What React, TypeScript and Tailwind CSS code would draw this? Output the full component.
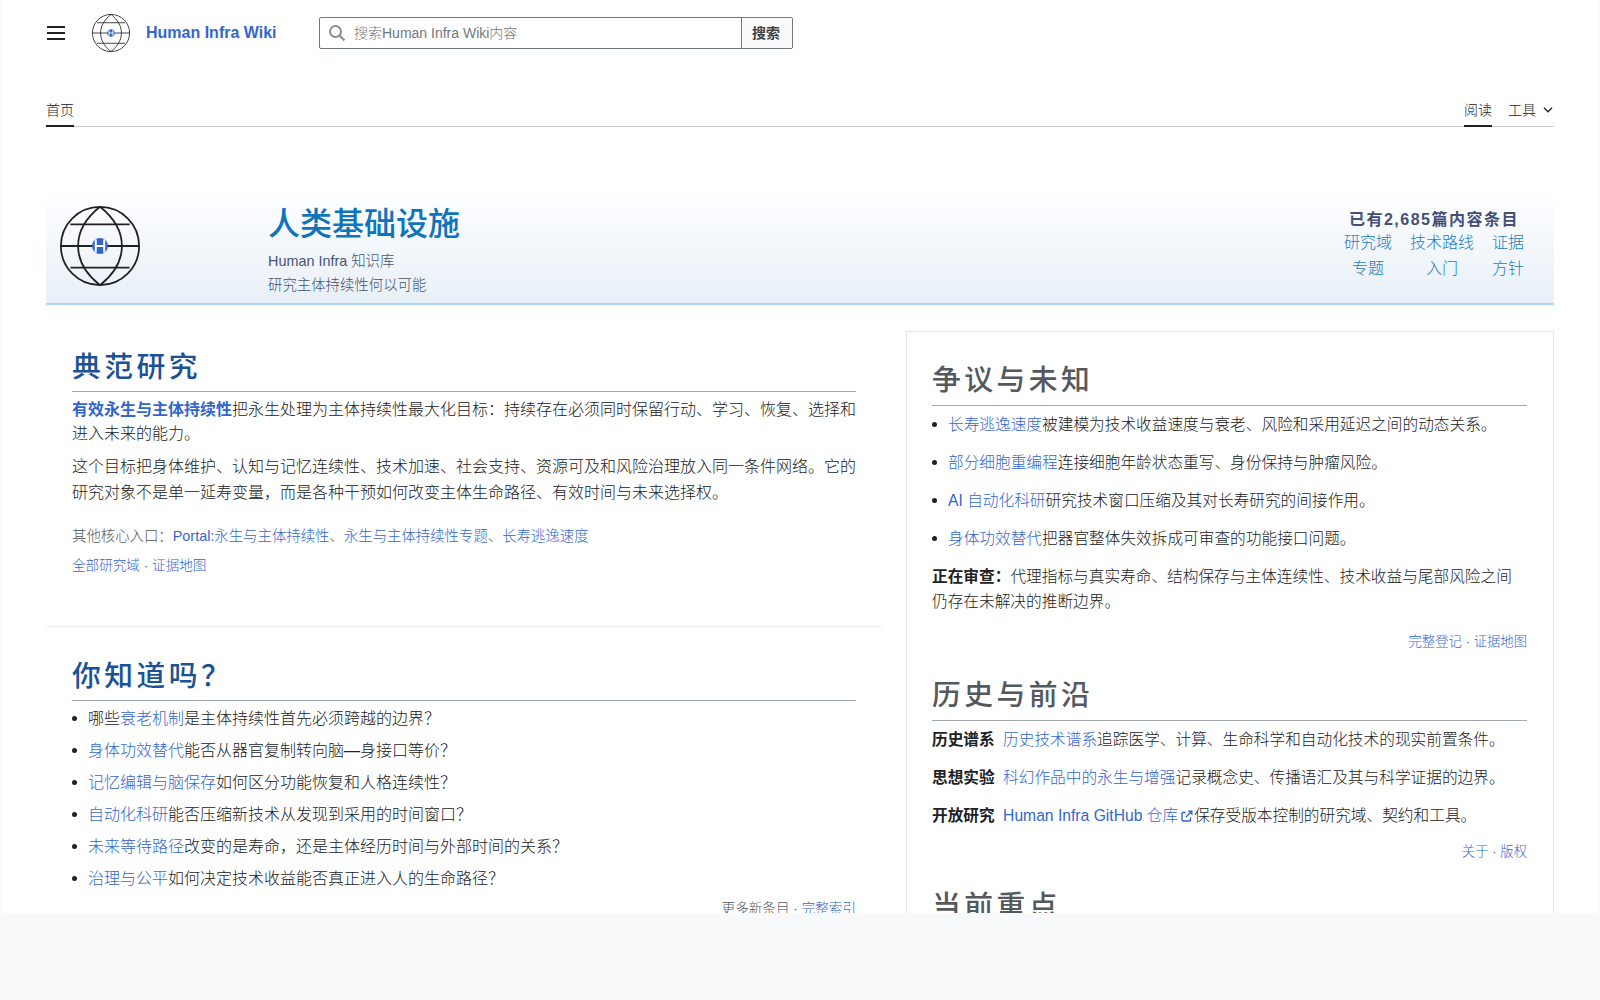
import React from 'react';

const Link = ({ children }: { children: React.ReactNode }) => (
  <a href="#" className="text-[#3366cc]">{children}</a>
);

const Globe = ({ className }: { className: string }) => (
  <svg viewBox="0 0 100 100" className={className} fill="none" stroke="#202122" strokeWidth="2.2">
    <circle cx="50" cy="50" r="48.9" />
    <path d="M50 1 C13.5 30 13.5 70 50 99 M50 1 C86.5 30 86.5 70 50 99" />
    <path d="M1 50H99 M13 23H87 M13 77H87" />
    <circle cx="50" cy="50" r="10" fill="#3366cc" stroke="none" />
    <path d="M44.7 42V58 M55.3 42V58 M44.7 50H55.3" stroke="#fff" strokeWidth="2.5" />
  </svg>
);

const facts = [
  { before: '哪些', link: '衰老机制', after: '是主体持续性首先必须跨越的边界？' },
  { before: '', link: '身体功效替代', after: '能否从器官复制转向脑—身接口等价？' },
  { before: '', link: '记忆编辑与脑保存', after: '如何区分功能恢复和人格连续性？' },
  { before: '', link: '自动化科研', after: '能否压缩新技术从发现到采用的时间窗口？' },
  { before: '', link: '未来等待路径', after: '改变的是寿命，还是主体经历时间与外部时间的关系？' },
  { before: '', link: '治理与公平', after: '如何决定技术收益能否真正进入人的生命路径？' },
];

const disputes = [
  { link: '长寿逃逸速度', after: '被建模为技术收益速度与衰老、风险和采用延迟之间的动态关系。' },
  { link: '部分细胞重编程', after: '连接细胞年龄状态重写、身份保持与肿瘤风险。' },
  { link: 'AI 自动化科研', after: '研究技术窗口压缩及其对长寿研究的间接作用。' },
  { link: '身体功效替代', after: '把器官整体失效拆成可审查的功能接口问题。' },
];

const Heading = ({ children, className }: { children: React.ReactNode; className: string }) => (
  <h2 className={`h-[47px] border-b border-[#a2a9b1] text-[28.8px] font-medium tracking-[0.12em] ${className}`}>
    {children}
  </h2>
);

const Header = () => (
  <header className="flex h-[66px] items-center">
    <button className="flex w-[18px] flex-col gap-1">
      <span className="h-0.5 bg-[#202122]" />
      <span className="h-0.5 bg-[#202122]" />
      <span className="h-0.5 bg-[#202122]" />
    </button>
    <Globe className="ml-[27px] size-[38px]" />
    <a href="#" className="ml-4 w-[173px] text-base font-bold text-[#3366cc]">Human Infra Wiki</a>
    <div className="flex h-8 w-[474px] rounded-xs border border-[#72777d] text-sm leading-[30px]">
      <div className="flex flex-1 items-center pl-[9px] text-[#72777d]">
        <svg viewBox="0 0 16 16" className="mr-[9px] size-4 text-[#8a8d91]" fill="none" stroke="currentColor" strokeWidth="2">
          <circle cx="6.5" cy="6.5" r="5.5" />
          <path d="M10.5 10.5 15.4 15.4" />
        </svg>
        <span>搜索Human Infra Wiki内容</span>
      </div>
      <button className="w-[51px] border-l border-[#72777d] bg-[#f8f9fa] pr-0.5 font-bold text-[#404244]">搜索</button>
    </div>
  </header>
);

const App: React.FC = () => {
  return (
    <div className="h-screen overflow-hidden bg-[#f8f9fb] font-['Liberation_Sans','Noto_Sans_CJK_SC',sans-serif] text-base font-light text-[#202122]">
      <div className="mx-0.5 h-[913px] overflow-hidden bg-white pr-11 pl-11">
        <div className="pl-px"><Header /></div>

        {/* Seitenreiter */}
        <nav className="mt-[29px] flex h-8 justify-between border-b border-[#c8ccd1] text-sm leading-[30px]">
          <span className="h-8 border-b-2 border-[#202122]">首页</span>
          <div className="flex gap-4">
            <span className="h-8 border-b-2 border-[#202122]">阅读</span>
            <span className="flex h-[30px] items-center">
              工具
              <svg viewBox="0 0 10 6" className="mr-px ml-[7px] h-1.5 w-2.5" fill="none" stroke="#202122" strokeWidth="1.3">
                <path d="M1 .8 5 4.8 9 .8" />
              </svg>
            </span>
          </div>
        </nav>

        {/* Banner */}
        <section className="mt-[60px] flex h-[118px] items-start border-b-2 border-[#a9d8fa] bg-linear-to-b from-white to-[#e8f0f8] pl-3.5">
          <Globe className="mt-[19px] size-20" />
          <div className="ml-[128px] pt-[17px]">
            <h1 className="text-[32px] leading-[40px] font-medium text-[#0e74bc]">人类基础设施</h1>
            <p className="mt-[5px] text-[14.4px] leading-6 text-[#465273]">Human Infra 知识库</p>
            <p className="text-[14.4px] leading-6 text-[#465273]">研究主体持续性何以可能</p>
          </div>
          <div className="mr-[30px] ml-auto pt-[21px]">
            <p className="h-[22px] text-center leading-6 font-bold tracking-[1.5px] text-[#434f76]">已有2,685篇内容条目</p>
            <div className="grid grid-cols-[auto_auto_auto] gap-x-[18px] text-center leading-[25.6px] text-[#1d7cc0]">
              <a href="#">研究域</a>
              <a href="#">技术路线</a>
              <a href="#">证据</a>
              <a href="#">专题</a>
              <a href="#">入门</a>
              <a href="#">方针</a>
            </div>
          </div>
        </section>

        <div className="mt-[26px] flex gap-6">
          <main className="w-[836px]">
            <section className="h-[296px] border-b border-[#eaecf0] px-[26px] pt-[14px]">
              <Heading className="leading-[45px] text-[#1b5296]">典范研究</Heading>
              <p className="mt-1.5 -mr-0.5 leading-6">
                <b className="font-bold"><Link>有效永生与主体持续性</Link></b>把永生处理为主体持续性最大化目标：持续存在必须同时保留行动、学习、恢复、选择和进入未来的能力。
              </p>
              <p className="mt-2 leading-[25.6px]">
                这个目标把身体维护、认知与记忆连续性、技术加速、社会支持、资源可及和风险治理放入同一条件网络。它的研究对象不是单一延寿变量，而是各种干预如何改变主体生命路径、有效时间与未来选择权。
              </p>
              <p className="mt-5 text-[14.4px] leading-[23px] text-[#54595d]">
                其他核心入口：<Link>Portal:永生与主体持续性</Link>、<Link>永生与主体持续性专题</Link>、<Link>长寿逃逸速度</Link>
              </p>
              <p className="mt-[7px] text-[13.6px] leading-[22px] text-[#54595d]">
                <Link>全部研究域</Link> · <Link>证据地图</Link>
              </p>
            </section>

            <section className="px-[26px] pt-[27px]">
              <Heading className="leading-[45px] text-[#1b5296]">你知道吗？</Heading>
              <ul className="mt-[5px]">
                {facts.map((fact) => (
                  <li key={fact.link} className="mb-[6.4px] flex items-center leading-[25.6px]">
                    <span className="mr-[11px] size-[5px] rounded-full bg-[#202122]" />
                    <span>{fact.before}<Link>{fact.link}</Link>{fact.after}</span>
                  </li>
                ))}
              </ul>
              <p className="mt-[5px] text-right text-[13.6px] leading-[22px] text-[#54595d]">
                更多新条目 · <Link>完整索引</Link>
              </p>
            </section>
          </main>

          <aside className="h-[640px] w-[648px] border border-[#e4e6ea] pt-[27px] pr-[26px] pl-[25px] text-[15.68px]">
            <Heading className="leading-[43px] text-[#54595d]">争议与未知</Heading>
            <ul className="mt-1.5">
              {disputes.map((item) => (
                <li key={item.link} className="mb-[12.4px] flex items-center leading-[25.6px]">
                  <span className="mr-[11px] size-[5px] rounded-full bg-[#202122]" />
                  <span><Link>{item.link}</Link>{item.after}</span>
                </li>
              ))}
            </ul>
            <p className="leading-[25.2px]">
              <b className="font-bold">正在审查：</b>代理指标与真实寿命、结构保存与主体连续性、技术收益与尾部风险之间仍存在未解决的推断边界。
            </p>
            <p className="mt-[17px] text-right text-[13.33px] leading-[22px] text-[#54595d]">
              <Link>完整登记</Link> · <Link>证据地图</Link>
            </p>

            <Heading className="mt-[21px] leading-[43px] text-[#54595d]">历史与前沿</Heading>
            <div className="mt-1.5 flex flex-col gap-[12.4px] leading-[25.6px]">
              <p><b className="mr-1 font-bold">历史谱系</b> <Link>历史技术谱系</Link>追踪医学、计算、生命科学和自动化技术的现实前置条件。</p>
              <p><b className="mr-1 font-bold">思想实验</b> <Link>科幻作品中的永生与增强</Link>记录概念史、传播语汇及其与科学证据的边界。</p>
              <p className="h-[25.6px]">
                <b className="mr-1 font-bold">开放研究</b>{' '}
                <Link>
                  Human Infra GitHub 仓库
                  <svg viewBox="0 0 12 12" className="mr-px ml-[3px] mb-0.5 inline size-3" fill="none" stroke="currentColor" strokeWidth="1.4">
                    <path d="M4.5 2.5H2A1 1 0 0 0 1 3.5V10A1 1 0 0 0 2 11H8.5A1 1 0 0 0 9.5 10V7.5" />
                    <path d="M4.8 7.2 10 2" />
                    <path d="M6.5 .5H11.5V5.5Z" fill="currentColor" stroke="none" />
                  </svg>
                </Link>
                保存受版本控制的研究域、契约和工具。
              </p>
            </div>
            <p className="mt-3 text-right text-[13.33px] leading-[22px] text-[#54595d]">
              <Link>关于</Link> · <Link>版权</Link>
            </p>

            <Heading className="mt-[21px] leading-[44px] text-[#54595d]">当前重点</Heading>
          </aside>
        </div>
      </div>
    </div>
  );
};

export default App;
